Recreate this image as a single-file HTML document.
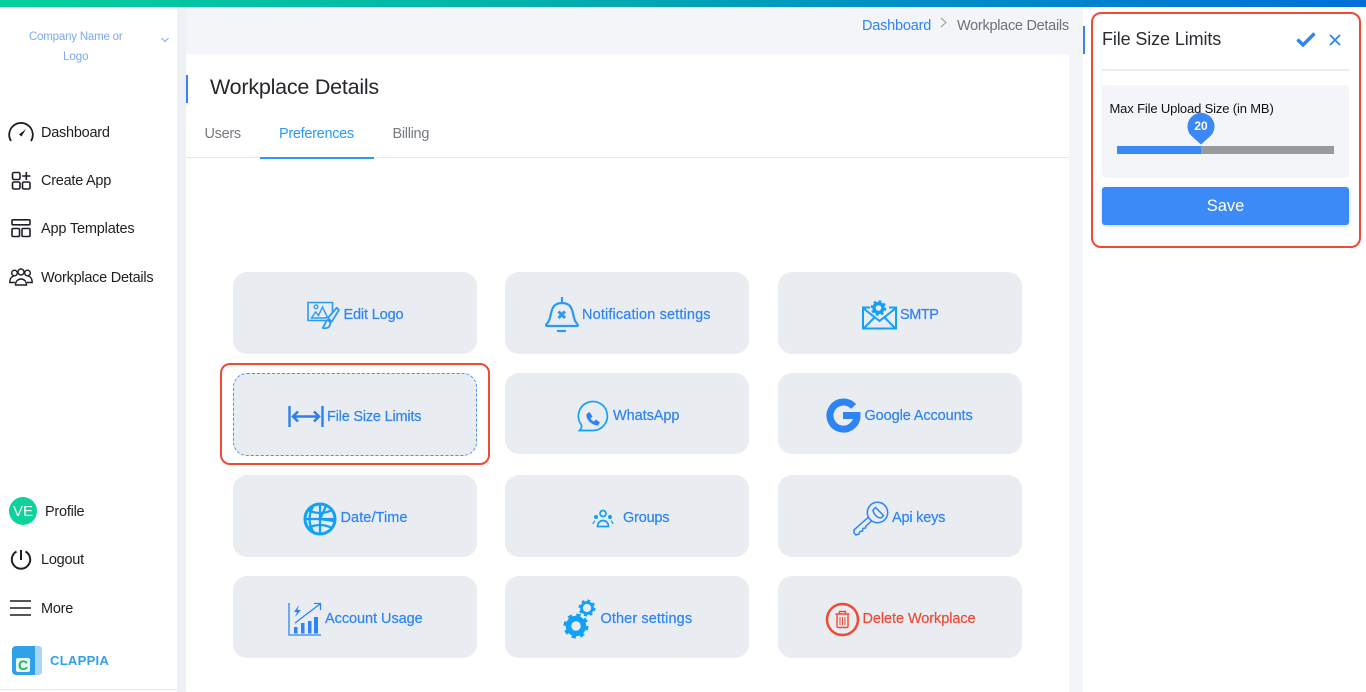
<!DOCTYPE html>
<html><head><meta charset="utf-8"><title>Workplace Details</title>
<style>
*{box-sizing:border-box}
html,body{margin:0;padding:0;width:1366px;height:692px;overflow:hidden;background:#fff;font-family:"Liberation Sans",sans-serif}
.a{position:absolute}
.t{position:absolute;white-space:nowrap;line-height:20px;font-size:14.5px;letter-spacing:-.25px}
.nav{color:#1d1f24}
.card{position:absolute;width:244px;height:81.5px;background:#e9ecf1;border-radius:14px}
.l{color:#2d84f5;font-size:14.5px;-webkit-text-stroke:.2px currentColor}
svg{position:absolute;overflow:visible}
</style></head><body>
<div class="a" style="left:0;top:0;width:1366px;height:7px;background:linear-gradient(90deg,#06cf9c 0%,#04b5a8 35%,#0191c4 65%,#0070d8 100%)"></div>
<div class="a" style="left:177px;top:7px;width:906px;height:685px;background:#f3f5f9"></div>
<div class="a" style="left:177px;top:7px;width:9px;height:685px;background:#edf0f4"></div>
<div class="a" style="left:0;top:689px;width:177px;height:1px;background:#e6e8ec"></div>

<div class="t" style="left:29px;top:27px;font-size:11.5px;letter-spacing:-.2px;color:#7ea7f2">Company Name or</div>
<div class="t" style="left:63px;top:47px;font-size:11.5px;letter-spacing:0;color:#7ea7f2">Logo</div>
<svg style="left:161px;top:37px" width="8" height="6" fill="none" stroke="#7ea7f2" stroke-width="1"><path d="M.5 1l3.500 3.500L7.500 1"/></svg>

<svg style="left:8px;top:121px" width="26" height="22" fill="none" stroke="#1d1f24" stroke-width="1.800"><path d="M3 20A11.800 11.800 0 1 1 23 20"/><path d="M11 13.500l7-5.500-4.500 7.500z" fill="#1d1f24" stroke="none"/></svg>
<div class="t nav" style="left:41px;top:123px">Dashboard</div>
<svg style="left:11px;top:170px" width="21" height="20" fill="none" stroke="#1d1f24" stroke-width="1.600"><rect x="1.500" y="2.500" width="7.500" height="7" rx="1.500"/><rect x="1.500" y="12" width="7.500" height="7" rx="1.500"/><rect x="11.500" y="12" width="7.500" height="7" rx="1.500"/><path d="M15.300 2v8M11 6h8.500"/></svg>
<div class="t nav" style="left:41px;top:171px">Create App</div>
<svg style="left:11px;top:219px" width="20" height="20" fill="none" stroke="#1d1f24" stroke-width="1.600"><rect x="1" y=".8" width="18" height="5" rx="1"/><rect x="1" y="9.500" width="7.500" height="8" rx="1"/><rect x="11" y="9.500" width="8" height="8" rx="1"/></svg>
<div class="t nav" style="left:41px;top:219px;letter-spacing:-.17px">App Templates</div>
<svg style="left:9px;top:268px" width="24" height="18" fill="none" stroke="#1d1f24" stroke-width="1.400"><circle cx="12" cy="4" r="3"/><circle cx="5.500" cy="5" r="2.800"/><circle cx="18.500" cy="5" r="2.800"/><path d="M6.500 17c0-8 11-8 11 0zM6 14.500H.8c0-4 2-6 4-6.500M18 14.500h5.200c0-4-2-6-4-6.500"/></svg>
<div class="t nav" style="left:41px;top:268px">Workplace Details</div>

<div class="a" style="left:9px;top:497px;width:28px;height:28px;border-radius:50%;background:#0dd39a;color:#fff;font-size:15px;line-height:29px;text-align:center">VE</div>
<div class="t nav" style="left:45px;top:502px">Profile</div>
<svg style="left:10px;top:549px" width="22" height="22" fill="none" stroke="#1d1f24" stroke-width="2"><path d="M6.500 2.500A9.200 9.200 0 1 0 15.500 2.500M11 1v10"/></svg>
<div class="t nav" style="left:41px;top:550px">Logout</div>
<svg style="left:10px;top:600px" width="22" height="16" fill="none" stroke="#1d1f24" stroke-width="1.500"><path d="M0 1h21M0 8h21M0 15h21"/></svg>
<div class="t nav" style="left:41px;top:599px">More</div>
<div class="a" style="left:12px;top:646px;width:30px;height:29px;border-radius:4px;background:#2fa0ea"></div>
<div class="a" style="left:35px;top:646px;width:7px;height:29px;border-radius:0 4px 4px 0;background:#a9d6f5"></div>
<div class="a" style="left:16px;top:658px;width:14px;height:14px;background:#e9f7ee;border-radius:2px;color:#19b766;font-size:14px;font-weight:bold;line-height:14px;text-align:center">C</div>
<div class="t" style="left:50px;top:651px;font-size:13px;font-weight:bold;letter-spacing:.3px;color:#2fa0ea">CLAPPIA</div>

<div class="t" style="left:862px;top:16px;color:#2d84f5;letter-spacing:-.2px">Dashboard</div>
<svg style="left:940px;top:17px" width="8" height="11" fill="none" stroke="#8b9096" stroke-width=".9"><path d="M1 1l5 4.500-5 4.500"/></svg>
<div class="t" style="left:957px;top:16px;color:#6d7278;letter-spacing:-.28px">Workplace Details</div>
<div class="a" style="left:1083px;top:26px;width:2px;height:28px;background:#3b82f6"></div>

<div class="a" style="left:186px;top:54px;width:883px;height:638px;background:#fff"></div>
<div class="a" style="left:186px;top:75px;width:2px;height:28px;background:#3b82f6"></div>
<div class="t" style="left:210px;top:77px;font-size:21.500px;letter-spacing:-.23px;color:#24272b">Workplace Details</div>
<div class="t" style="left:204.500px;top:124px;color:#767b82;letter-spacing:-.3px">Users</div>
<div class="t" style="left:279px;top:124px;color:#2a9af5;letter-spacing:-.3px">Preferences</div>
<div class="t" style="left:392.500px;top:124px;color:#767b82;letter-spacing:-.3px">Billing</div>
<div class="a" style="left:186px;top:157px;width:883px;height:1px;background:#e4e6ea"></div>
<div class="a" style="left:260px;top:157px;width:114px;height:2px;background:#2a9af5"></div>

<div class="card" style="left:233px;top:272px"></div>
<div class="card" style="left:505px;top:272px"></div>
<div class="card" style="left:778px;top:272px"></div>
<div class="a" style="left:220px;top:363px;width:270px;height:102px;border:2px solid #f04a35;border-radius:10px"></div>
<div class="card" style="left:233px;top:373px;height:83px;border:1px dashed #4d92ee"></div>
<div class="card" style="left:505px;top:372.500px"></div>
<div class="card" style="left:778px;top:372.500px"></div>
<div class="card" style="left:233px;top:475px"></div>
<div class="card" style="left:505px;top:475px"></div>
<div class="card" style="left:778px;top:475px"></div>
<div class="card" style="left:233px;top:576px"></div>
<div class="card" style="left:505px;top:576px"></div>
<div class="card" style="left:778px;top:576px"></div>

<!-- Edit logo -->
<svg style="left:307px;top:300px" width="34" height="30" fill="none" stroke="#2a9af5" stroke-width="1.600"><path d="M20 20.500H1V2.500h24.500v10"/><path d="M4.500 18l4-6 3 3.500 4-8.500 4.500 9.500-1 1.500z" stroke-width="1.400"/><circle cx="9" cy="6.800" r="1.900" stroke-width="1.300"/><path d="M29.700 7.700L32 10 24.700 21.700 21 18z" stroke-width="1.800" stroke-linejoin="round"/><path d="M20.500 20c-2 1-2.500 5-4.800 8 3 .5 6 0 6.800-2 .7-1.500 1-3 .8-4z" stroke-width="1.800" stroke-linejoin="round"/></svg>
<div class="t l" style="left:343.500px;top:305px;letter-spacing:-.15px">Edit Logo</div>
<!-- Bell -->
<svg style="left:544px;top:296px" width="36" height="38" fill="none" stroke="#2a9af5" stroke-width="2.200"><path d="M18 1v6M2.500 30c-1-1 0-2 1-3 3-3 2.500-8 4.500-13C9.500 9 13 7 18 7s8.500 2 10 7c2 5 1.500 10 4.500 13 1 1 2 2 1 3z" stroke-linejoin="round"/><path d="M14.500 15.500l6.500 6.500M21 15.500L14.500 22" stroke-width="3"/><path d="M13 35h9" stroke-width="2.200"/></svg>
<div class="t l" style="left:582px;top:305px;letter-spacing:.14px">Notification settings</div>
<!-- SMTP -->
<svg style="left:862px;top:300px" width="35" height="30" fill="none" stroke="#12a1f8" stroke-width="2"><path d="M8 7.500H1v21h33v-21h-7"/><path d="M1 8l16.500 13L34 8M2 28l11-11M33 28L22 17"/><circle cx="16.500" cy="8" r="4.500" stroke-width="3.500"/><circle cx="16.500" cy="8" r="6.800" stroke-width="2" stroke-dasharray="2.600 2.740"/></svg>
<div class="t l" style="left:900px;top:305px;letter-spacing:-.45px">SMTP</div>
<!-- File size -->
<svg style="left:288px;top:406px" width="36" height="21" fill="none" stroke="#2d7ff0" stroke-width="2.500"><path d="M1.500 0v21M34.500 0v21" stroke-width="2.400"/><path d="M5 10.500h26M10 5.500l-5 5 5 5M26 5.500l5 5-5 5"/></svg>
<div class="t l" style="left:327px;top:407px;letter-spacing:-.2px">File Size Limits</div>
<!-- WhatsApp -->
<svg style="left:578px;top:401px" width="30" height="32" fill="none" stroke="#12a1f8" stroke-width="1.700"><path d="M1.500 29.500H15A14.500 14.500 0 1 0 3.500 24c.5 2-.5 4-2 5.500z"/><path d="M8.500 13l3-2 3 4.500-2 2c1 1.500 2 2.500 3.500 3l2-2 4 3-2 3c-6 0-12.500-6-11.500-11.500z" fill="#2d84f5" stroke="none"/></svg>
<div class="t l" style="left:613px;top:406px;letter-spacing:-.07px">WhatsApp</div>
<!-- Google -->
<svg style="left:826px;top:398px" width="35" height="35" fill="none" stroke="#2d84f5" stroke-width="7"><path d="M27.500 8.500A13.500 13.500 0 1 0 31 17.500H17"/></svg>
<div class="t l" style="left:864.500px;top:406px;letter-spacing:-.1px">Google Accounts</div>
<!-- Globe -->
<svg style="left:303px;top:502px" width="34" height="34" fill="none" stroke="#12a1f8" stroke-width="2.300"><circle cx="17" cy="17" r="15" stroke-width="3"/><path d="M17 2v30M2 17h30M5 8c8 4 16 4 24 0M5 26c8-4 16-4 24 0"/><path d="M11 3c-6 9-6 19 0 28M23 3c-1 4-3 8-6 14l14 2"/></svg>
<div class="t l" style="left:340.500px;top:508px;letter-spacing:.08px">Date/Time</div>
<!-- Groups -->
<svg style="left:592px;top:510px" width="22" height="18" fill="none" stroke="#12a1f8" stroke-width="1.700"><circle cx="11" cy="3.500" r="3"/><circle cx="4" cy="7" r="2" fill="#12a1f8" stroke="none"/><circle cx="18" cy="7" r="2" fill="#12a1f8" stroke="none"/><path d="M5.500 16.500c0-8 11-8 11 0z"/><path d="M1 14c0-1 1-2.500 2-3M21 14c0-1-1-2.500-2-3" stroke-width="1.300"/></svg>
<div class="t l" style="left:623px;top:508px;letter-spacing:-.2px">Groups</div>
<!-- Key -->
<svg style="left:853px;top:501px" width="36" height="36" fill="none" stroke="#2d84f5" stroke-width="1.500"><circle cx="24.500" cy="11.500" r="10.200"/><path d="M20 9l2.500-2.500 8 8-2.500 2.500c-4 0-7.500-4-8-8z"/><path d="M15 16.500L1 29v3l2 2 3-1 1-2.500 2.500-.5.5-2.500 2.500-.5.500-2 6-5.500"/></svg>
<div class="t l" style="left:892px;top:508px;letter-spacing:-.2px">Api keys</div>
<!-- Usage -->
<svg style="left:288px;top:602px" width="34" height="34" fill="none" stroke="#2d84f5"><path d="M1 1v32h32" stroke-width="1.300"/><path d="M7 21L32 2M26 1.500h6.500V8" stroke-width="1.300"/><path d="M11 3l-5 7h3l-2 5 6-7H9.500l1.500-5z" fill="#2d84f5" stroke="none"/><path d="M6 25h3.500v6.500H6zM13 21h3.500v10.500H13zM20 19h3.500v12.500H20zM26 15h4v16.500h-4z" fill="#2d84f5" stroke="none"/></svg>
<div class="t l" style="left:325px;top:609px;letter-spacing:-.05px">Account Usage</div>
<!-- Gears -->
<svg style="left:563px;top:600px" width="34" height="40" fill="none" stroke="#12a1f8"><circle cx="13" cy="26" r="7.500" stroke-width="5.500"/><circle cx="13" cy="26" r="11" stroke-width="3" stroke-dasharray="4.320 4.320"/><circle cx="24" cy="8" r="5.500" stroke-width="2.800"/><circle cx="24" cy="8" r="7.500" stroke-width="2" stroke-dasharray="2.950 2.950"/></svg>
<div class="t l" style="left:600.500px;top:609px;letter-spacing:.1px">Other settings</div>
<!-- Delete -->
<svg style="left:825px;top:602px" width="35" height="35" fill="none" stroke="#ef4a36" stroke-width="1.400"><circle cx="17.500" cy="17.500" r="15.500" stroke-width="2.500"/><path d="M10.500 12h14M14.500 11.500V9.500h6v2M12 12.500V24c0 1 .5 1.500 1.500 1.500h8c1 0 1.500-.5 1.500-1.500V12.500"/><path d="M15 15v8M17.500 15v8M20 15v8" stroke-width="1"/></svg>
<div class="t l" style="left:862.500px;top:609px;color:#ef4a36;letter-spacing:-.07px">Delete Workplace</div>

<!-- Right panel -->
<div class="a" style="left:1091px;top:12px;width:270px;height:236px;border:2px solid #f04a35;border-radius:10px"></div>
<div class="t" style="left:1102px;top:29px;font-size:18px;letter-spacing:-.12px;color:#2a2d31">File Size Limits</div>
<svg style="left:1296px;top:32px" width="20" height="15" fill="none" stroke="#2d84f5" stroke-width="3.400"><path d="M1.500 7.500l5.500 5.500L18.500 1.500"/></svg>
<svg style="left:1329px;top:34px" width="12" height="12" fill="none" stroke="#2d84f5" stroke-width="1.800"><path d="M1 1l10 10M11 1L1 11"/></svg>
<div class="a" style="left:1102px;top:69px;width:247px;height:1.500px;background:#e9ebef"></div>
<div class="a" style="left:1102px;top:85px;width:247px;height:93px;background:#f4f5f9;border-radius:4px"></div>
<div class="t" style="left:1109.500px;top:99px;font-size:13px;letter-spacing:-.15px;color:#111">Max File Upload Size (in MB)</div>
<div class="a" style="left:1117px;top:146px;width:84px;height:8px;background:#3b87f5"></div>
<div class="a" style="left:1201px;top:146px;width:133px;height:8px;background:#999a9c"></div>
<svg style="left:1187px;top:112px" width="28" height="33"><path d="M14 32.500L4 23.500A13.500 13.500 0 1 1 24 23.500z" fill="#3b87f5"/></svg>
<div class="t" style="left:1187px;top:116px;width:28px;text-align:center;font-size:12px;font-weight:bold;letter-spacing:0;color:#fff">20</div>
<div class="a" style="left:1102px;top:187px;width:247px;height:38px;background:#3b8af7;border-radius:3px;box-shadow:0 1px 3px rgba(59,138,247,.35);color:#fff;font-size:16.500px;line-height:38px;text-align:center;letter-spacing:0">Save</div>
</body></html>
